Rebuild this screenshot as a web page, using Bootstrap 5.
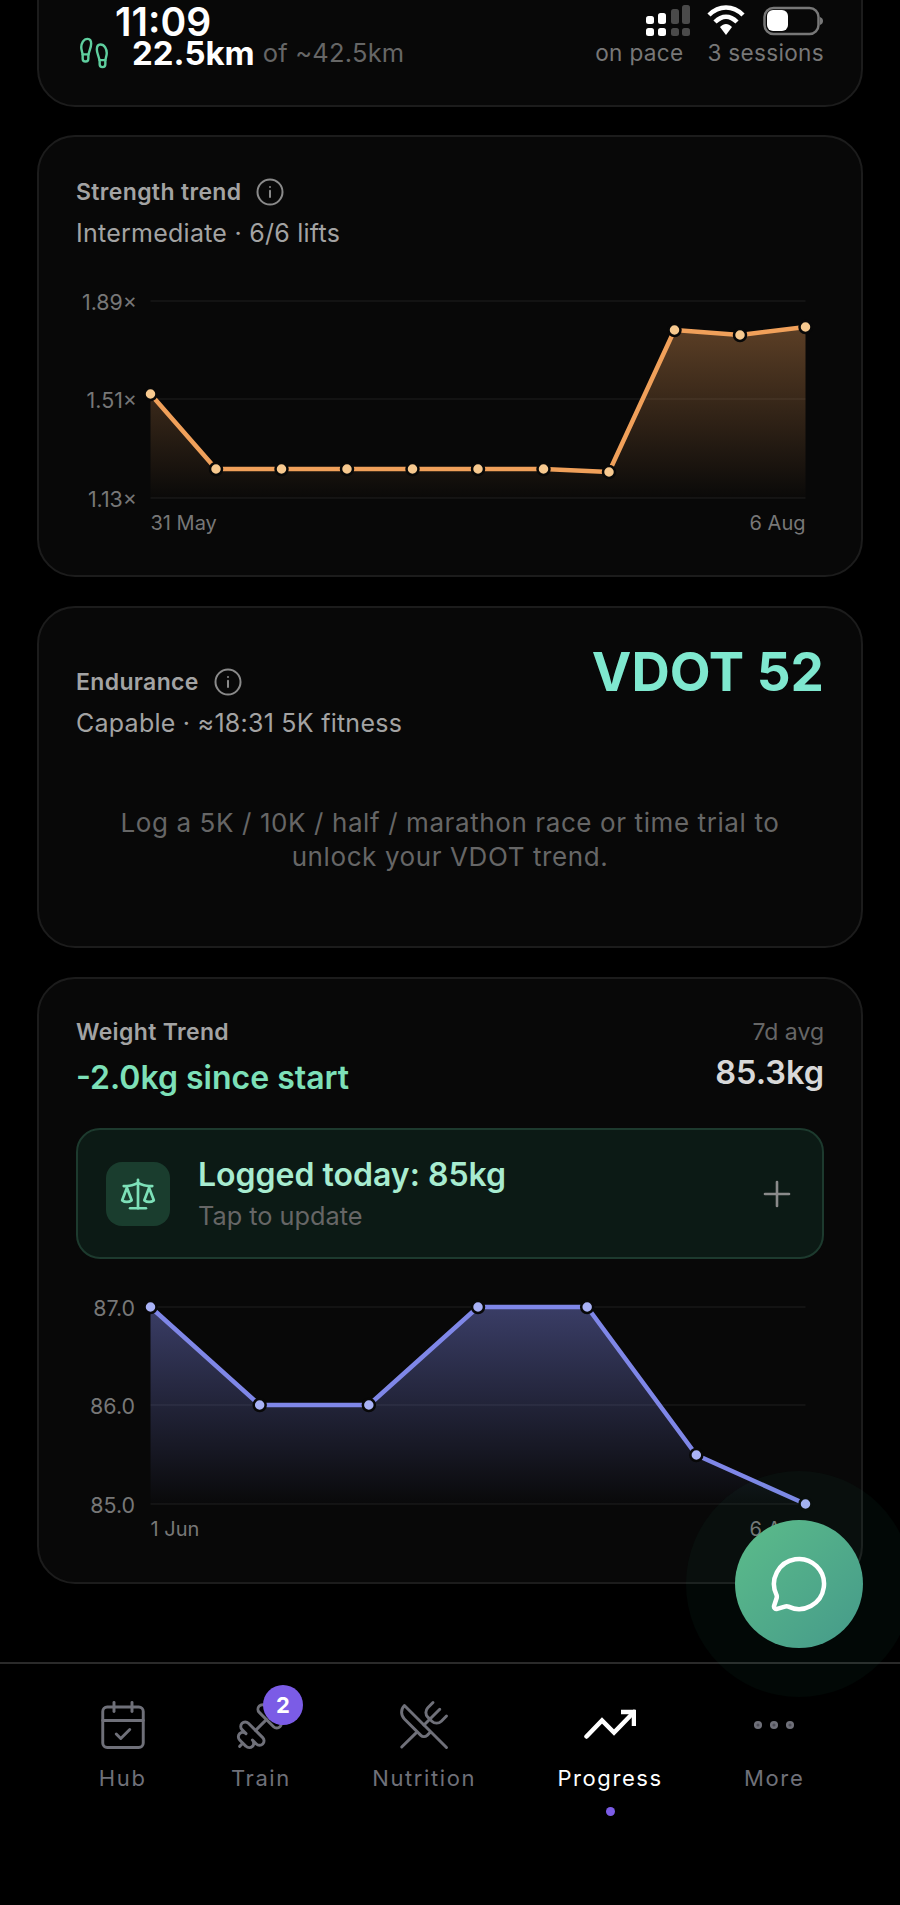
<!DOCTYPE html>
<html lang="en">
<head>
  <meta charset="UTF-8" />
  <meta name="viewport" content="width=device-width, initial-scale=1.0"/>
  <title>Progress</title>
  <link href="https://cdn.jsdelivr.net/npm/bootstrap@5.3.0/dist/css/bootstrap.min.css" rel="stylesheet">
  <style>
    html, body { margin: 0; background: #000; }
    body { font-family: Inter, "Liberation Sans", sans-serif; color: #fff; }

    .app-shell { position: relative; width: 900px; height: 1905px; overflow: hidden; background: #000; }
    .app-main { height: 1662px; overflow: hidden; padding: 0 37px; }

    .trend-card { background: #080808; border: 2px solid #1c1c1c; border-radius: 38px; padding: 40px 37px 34px; margin-bottom: 29px; color: #fff; }
    .summary-card { height: 247px; margin-top: -140px; margin-bottom: 28px; padding: 0 37px 0; }
    .summary-row { height: 245px; padding-top: 138px; }
    .feet-icon { width: 34px; height: 34px; color: #5fcf9f; margin: 0 21px 0 1px; }
    .km-main { font-size: 33px; font-weight: 700; line-height: 36px; }
    .km-of { font-size: 25.5px; line-height: 36px; color: #666; margin-left: 8px; letter-spacing: .2px; }
    .km-note { font-size: 22.6px; line-height: 30px; color: #777; letter-spacing: .3px; }

    .trend-title { font-size: 23px; line-height: 28px; font-weight: 600; color: #a3a3a3; letter-spacing: .35px; }
    .trend-sub { font-size: 25px; line-height: 34px; color: #a3a3a3; margin-top: 9px; letter-spacing: .25px; }
    .info-glyph { width: 30px; height: 30px; color: #8a8a8a; margin-left: 14px; }
    .chart-svg { display: block; margin: 21px 0 0; overflow: visible; }
    .axis-text { font-family: Inter, "Liberation Sans", sans-serif; font-size: 21.4px; fill: #777; }
    .axis-date { font-size: 20px; }

    .endurance-card { height: 342px; padding-top: 33px; }
    .vdot-value { font-size: 53px; line-height: 62px; font-weight: 700; color: #7fe8cf; }
    .endurance-hint { font-size: 26px; line-height: 34px; color: #666; text-align: center; margin-top: 66px; letter-spacing: .6px; }
    .endurance-head { padding-top: 26px; }

    .weight-card { height: 607px; padding-top: 39px; }
    .weight-delta { font-size: 32px; line-height: 40px; font-weight: 600; color: #7de0b8; margin-top: 12px; }
    .weight-avg-label { font-size: 23px; line-height: 28px; color: #666; }
    .weight-avg { font-size: 32.5px; line-height: 40px; font-weight: 600; color: #d8d8d8; margin-top: 7px; }

    .logged-row { height: 131px; margin-top: 30px; background: #0c1a15; border: 2px solid #1d3a2e; border-radius: 24px; padding: 0 30px 0 28px; }
    .logged-icon { width: 64px; height: 64px; border-radius: 16px; background: #1a3d2e; color: #7de0b8; margin-right: 28px; }
    .logged-title { font-size: 32px; line-height: 38px; font-weight: 600; color: #a8ecd0; }
    .logged-sub { font-size: 25.3px; line-height: 32px; color: #666; margin-top: 6px; }
    .logged-plus { color: #8a8a8a; }
    .weight-card .chart-svg { margin-top: 22px; }

    .chat-fab { position: absolute; left: 735px; top: 1520px; width: 128px; height: 128px; border-radius: 50%; background: linear-gradient(135deg, #5cbc8a, #459a8a); box-shadow: 0 0 0 49px rgba(52, 211, 153, .04); color: #fff; z-index: 5; }

    .tab-bar { height: 243px; border-top: 2px solid #2a2a2a; padding: 30px 55px 0; background: #000; }
    .tab-item { position: relative; width: auto; color: #6f7079; }
    .tab-item.is-active { color: #fff; }
    .tab-icon { height: 62px; }
    .tab-label { font-size: 22px; line-height: 30px; font-weight: 400; letter-spacing: 1.6px; margin-top: 7px; }
    .tab-badge { position: absolute; left: 32px; top: -9px; width: 40px; height: 40px; border-radius: 50%; background: #7b5ce6; color: #fff; font-size: 22px; font-weight: 700; line-height: 40px; text-align: center; }
    .tab-dot { position: absolute; left: 50%; margin-left: -4.5px; top: 113px; width: 9px; height: 9px; border-radius: 50%; background: #7b5ce6; }
    .progress-glyph { margin-top: -3px; }

    .status-layer { position: absolute; left: 0; top: 0; width: 900px; height: 40px; z-index: 4; }
    .status-time { position: absolute; left: 115px; top: 1px; font-size: 39px; line-height: 42px; font-weight: 600; }
    .status-icons { position: absolute; left: 645px; top: 4px; }
  </style>
</head>
<body>
  <div class="app-shell">

    <!-- status bar -->
    <div class="status-layer">
      <div class="status-time">11:09</div>
      <svg class="status-icons" width="182" height="34" viewBox="0 0 182 34">
        <g fill="#fff">
          <rect x="1" y="12" width="8" height="8" rx="2.5"/><rect x="1" y="24" width="8" height="8" rx="2.5"/>
          <rect x="13" y="9" width="8" height="11" rx="2.5"/><rect x="13" y="24" width="8" height="8" rx="2.5"/>
        </g>
        <g fill="#4a4a4a">
          <rect x="26" y="5" width="8" height="15" rx="2.5"/><rect x="26" y="24" width="8" height="8" rx="2.5"/>
          <rect x="37" y="1" width="8" height="19" rx="2.5"/><rect x="37" y="24" width="8" height="8" rx="2.5"/>
        </g>
        <g fill="none" stroke="#fff" stroke-width="4.5">
          <path d="M64 11C74 1 88 1 98 11"/>
          <path d="M70 18C77 11 85 11 92 18"/>
        </g>
        <path d="M75 23C79 19 83 19 87 23L81 31Z" fill="#fff"/>
        <rect x="119.5" y="4" width="54" height="26" rx="9" fill="none" stroke="#777" stroke-width="2.5"/>
        <rect x="122" y="6" width="21" height="21" rx="6" fill="#fff"/>
        <path d="M175 13c2 .8 3 2 3 4s-1 3.200-3 4z" fill="#777"/>
      </svg>
    </div>

    <main class="app-main">

      <div class="card trend-card summary-card">
        <div class="d-flex align-items-center justify-content-between summary-row">
          <div class="d-flex align-items-center">
            <svg class="feet-icon" viewBox="0 0 24 24" fill="none" stroke="currentColor" stroke-width="1.7" stroke-linecap="round" stroke-linejoin="round">
              <path d="M4 16v-2.380C4 11.500 2.970 10.500 3 8c.03-2.720 1.490-6 4.500-6C9.370 2 10 3.800 10 5.500c0 3.110-2 5.660-2 8.680V16a2 2 0 1 1-4 0Z"/>
              <path d="M20 20v-2.380c0-2.120 1.030-3.120 1-5.620-.03-2.720-1.440-6-4.500-6C14.630 6 14 7.800 14 9.500c0 3.180 2 5.700 2 8.680V20a2 2 0 1 0 4 0Z"/>
              <path d="M16 17h4"/><path d="M4 13h4"/>
            </svg>
            <span class="km-main">22.5km</span><span class="km-of">of ~42.5km</span>
          </div>
          <div class="d-flex gap-4 km-note"><span>on pace</span><span>3 sessions</span></div>
        </div>
      </div>

      <div class="card trend-card" style="height:442px">
        <div class="d-flex align-items-center trend-title">Strength trend
          <svg class="info-glyph" viewBox="0 0 24 24" fill="none" stroke="currentColor" stroke-width="1.6" stroke-linecap="round"><circle cx="12" cy="12" r="10"/><path d="M12 16v-5"/><path d="M12 8h.01"/></svg>
        </div>
        <div class="trend-sub">Intermediate · 6/6 lifts</div>
        <svg id="strengthChart" class="chart-svg" width="748" height="270"></svg>
      </div>

      <div class="card trend-card endurance-card">
        <div class="d-flex justify-content-between align-items-start">
          <div class="endurance-head">
            <div class="d-flex align-items-center trend-title">Endurance
              <svg class="info-glyph" viewBox="0 0 24 24" fill="none" stroke="currentColor" stroke-width="1.6" stroke-linecap="round"><circle cx="12" cy="12" r="10"/><path d="M12 16v-5"/><path d="M12 8h.01"/></svg>
            </div>
            <div class="trend-sub">Capable · ≈18:31 5K fitness</div>
          </div>
          <div class="vdot-value">VDOT 52</div>
        </div>
        <div class="endurance-hint">Log a 5K / 10K / half / marathon race or time trial to<br>unlock your VDOT trend.</div>
      </div>

      <div class="card trend-card weight-card">
        <div class="d-flex justify-content-between">
          <div>
            <div class="trend-title">Weight Trend</div>
            <div class="weight-delta">-2.0kg since start</div>
          </div>
          <div class="text-end">
            <div class="weight-avg-label">7d avg</div>
            <div class="weight-avg">85.3kg</div>
          </div>
        </div>

        <div class="d-flex align-items-center logged-row">
          <div class="d-flex align-items-center justify-content-center logged-icon">
            <svg width="38" height="38" viewBox="0 0 24 24" fill="none" stroke="currentColor" stroke-width="1.7" stroke-linecap="round" stroke-linejoin="round">
              <path d="m16 16 3-8 3 8c-.87.65-1.920 1-3 1s-2.130-.35-3-1Z"/>
              <path d="m2 16 3-8 3 8c-.87.65-1.920 1-3 1s-2.130-.35-3-1Z"/>
              <path d="M7 21h10"/><path d="M12 3v18"/>
              <path d="M3 7h2c2 0 5-1 7-2 2 1 5 2 7 2h2"/>
            </svg>
          </div>
          <div class="flex-grow-1">
            <div class="logged-title">Logged today: 85kg</div>
            <div class="logged-sub">Tap to update</div>
          </div>
          <svg class="logged-plus" width="30" height="30" viewBox="0 0 30 30" stroke="currentColor" stroke-width="2.600" stroke-linecap="round"><path d="M15 3v24"/><path d="M3 15h24"/></svg>
        </div>

        <svg id="weightChart" class="chart-svg" width="748" height="265"></svg>
      </div>

    </main>

    <button type="button" class="btn d-flex align-items-center justify-content-center p-0 border-0 chat-fab" aria-label="Chat">
      <svg width="60" height="60" viewBox="0 0 24 24" fill="none" stroke="#fff" stroke-width="1.800" stroke-linecap="round" stroke-linejoin="round">
        <path d="M2.992 16.342a2 2 0 0 1 .094 1.167l-1.065 3.290a1 1 0 0 0 1.236 1.168l3.413-.998a2 2 0 0 1 1.099.092 10 10 0 1 0-4.777-4.719"/>
      </svg>
    </button>

    <nav class="d-flex justify-content-around align-items-start tab-bar">
      <div class="d-flex flex-column align-items-center tab-item">
        <div class="d-flex align-items-center justify-content-center tab-icon">
          <svg width="54" height="54" viewBox="0 0 24 24" fill="none" stroke="currentColor" stroke-width="1.300" stroke-linecap="round" stroke-linejoin="round">
            <path d="M8 2v4"/><path d="M16 2v4"/><rect width="18" height="18" x="3" y="4" rx="2"/><path d="M3 10h18"/><path d="m9 16 2 2 4-4"/>
          </svg>
        </div>
        <div class="tab-label">Hub</div>
      </div>
      <div class="d-flex flex-column align-items-center tab-item">
        <div class="d-flex align-items-center justify-content-center tab-icon">
          <svg width="54" height="54" viewBox="0 0 24 24" fill="none" stroke="currentColor" stroke-width="1.300" stroke-linecap="round" stroke-linejoin="round" transform="scale(-1 1)">
            <path d="M14.400 14.400 9.600 9.600"/>
            <path d="M18.657 21.485a2 2 0 1 1-2.829-2.828l-1.767 1.768a2 2 0 1 1-2.829-2.829l6.364-6.364a2 2 0 1 1 2.829 2.829l-1.768 1.767a2 2 0 1 1 2.828 2.829z"/>
            <path d="m21.500 21.500-1.400-1.400"/><path d="M3.900 3.900 2.500 2.500"/>
            <path d="M6.404 12.768a2 2 0 1 1-2.829-2.829l1.768-1.767a2 2 0 1 1-2.828-2.829l2.828-2.828a2 2 0 1 1 2.829 2.828l1.767-1.768a2 2 0 1 1 2.829 2.829z"/>
          </svg>
        </div>
        <div class="tab-label">Train</div>
        <span class="tab-badge">2</span>
      </div>
      <div class="d-flex flex-column align-items-center tab-item">
        <div class="d-flex align-items-center justify-content-center tab-icon">
          <svg width="54" height="54" viewBox="0 0 24 24" fill="none" stroke="currentColor" stroke-width="1.300" stroke-linecap="round" stroke-linejoin="round">
            <path d="m16 2-2.300 2.300a3 3 0 0 0 0 4.200l1.800 1.800a3 3 0 0 0 4.200 0L22 8"/>
            <path d="M15 15 3.300 3.300a4.200 4.200 0 0 0 0 6l7.300 7.300c.7.7 2 .7 2.800 0L15 15Zm0 0 7 7"/>
            <path d="m2.100 21.800 6.400-6.300"/><path d="m19 5-7 7"/>
          </svg>
        </div>
        <div class="tab-label">Nutrition</div>
      </div>
      <div class="d-flex flex-column align-items-center tab-item is-active">
        <div class="d-flex align-items-center justify-content-center tab-icon">
          <svg class="progress-glyph" width="52" height="30" viewBox="0 0 52 30" fill="none" stroke="currentColor" stroke-width="4.500" stroke-linecap="round" stroke-linejoin="miter">
            <path d="M2.500 27.500 18 11.500 30 23.500 50 3"/><path d="M37 3h13v14" stroke-linecap="butt"/>
          </svg>
        </div>
        <div class="tab-label">Progress</div>
        <span class="tab-dot"></span>
      </div>
      <div class="d-flex flex-column align-items-center tab-item">
        <div class="d-flex align-items-center justify-content-center tab-icon">
          <svg width="42" height="10" viewBox="0 0 42 10" fill="#4d4d57" stroke="currentColor" stroke-width="2.500"><circle cx="5" cy="5" r="2.800"/><circle cx="21" cy="5" r="2.800"/><circle cx="37" cy="5" r="2.800"/></svg>
        </div>
        <div class="tab-label">More</div>
      </div>
    </nav>
  </div>

  <script>
    // x and y are pixel positions inside each chart's own box
    function drawChart(id, cfg) {
      const left = 74.5, right = 729.5;
      const step = (right - left) / (cfg.points.length - 1);
      const pts = cfg.points.map((y, i) => [left + step * i, y]);
      const line = pts.map(p => p.join(',')).join(' ');
      const base = cfg.grid[cfg.grid.length - 1];
      let html = `<defs><linearGradient id="${id}Fill" x1="0" y1="0" x2="0" y2="1">
        <stop offset="0" stop-color="${cfg.color}" stop-opacity="${cfg.fillTop}"/>
        <stop offset="1" stop-color="${cfg.color}" stop-opacity="0.01"/></linearGradient></defs>`;
      cfg.grid.forEach((y, i) => {
        html += `<line x1="${left}" x2="${right}" y1="${y}" y2="${y}" stroke="#131313" stroke-width="2"/>`;
        html += `<text class="axis-text" x="${cfg.labelX}" y="${y + 9}" text-anchor="end">${cfg.labels[i]}</text>`;
      });
      html += `<polygon points="${left},${base} ${line} ${right},${base}" fill="url(#${id}Fill)"/>`;
      html += `<polyline points="${line}" fill="none" stroke="${cfg.color}" stroke-width="4.5" stroke-linejoin="round"/>`;
      pts.forEach(p => {
        html += `<circle cx="${p[0]}" cy="${p[1]}" r="6" fill="${cfg.dot}" stroke="#080808" stroke-width="2.5"/>`;
      });
      html += `<text class="axis-text axis-date" x="${left}" y="${cfg.dateY}">${cfg.from}</text>`;
      html += `<text class="axis-text axis-date" x="${right}" y="${cfg.dateY}" text-anchor="end">${cfg.to}</text>`;
      document.getElementById(id).innerHTML = html;
    }

    drawChart('strengthChart', {
      color: '#f0a05a', dot: '#f7c98f', fillTop: 0.36, labelX: 61,
      grid: [30, 128, 227], labels: ['1.89×', '1.51×', '1.13×'],
      points: [123, 198, 198, 198, 198, 198, 198, 201, 59, 64, 56],
      from: '31 May', to: '6 Aug', dateY: 259
    });

    drawChart('weightChart', {
      color: '#7f87e8', dot: '#a9b2f6', fillTop: 0.42, labelX: 59,
      grid: [26, 124, 223], labels: ['87.0', '86.0', '85.0'],
      points: [26, 124, 124, 26, 26, 174, 223],
      from: '1 Jun', to: '6 Aug', dateY: 255
    });
  </script>

  <script src="https://cdn.jsdelivr.net/npm/bootstrap@5.3.0/dist/js/bootstrap.bundle.min.js"></script>
</body>
</html>
